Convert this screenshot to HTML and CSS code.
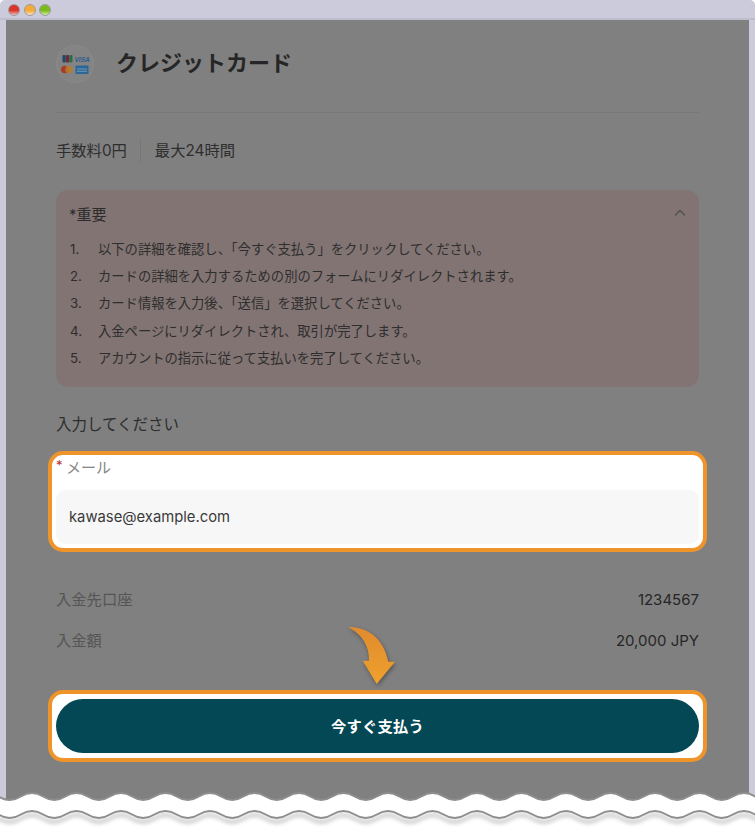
FILE: index.html
```html
<!DOCTYPE html>
<html lang="ja">
<head>
<meta charset="utf-8">
<title>クレジットカード</title>
<link rel="stylesheet" href="styles.css">
</head>
<body>
<div class="window">
  <div class="titlebar">
    <span class="light red"></span>
    <span class="light amber"></span>
    <span class="light green"></span>
  </div>
  <main class="screen">
    <header class="head">
      <div class="logo">
        <svg viewBox="0 0 38 38" width="38" height="38">
          <rect x="6.5" y="10" width="3.2" height="7.500" rx="1" fill="#21476a"/>
          <rect x="9.900" y="10" width="3.2" height="7.500" rx="1" fill="#6d2b35"/>
          <rect x="13.300" y="10" width="3.2" height="7.500" rx="1" fill="#2c6b45"/>
          <text x="18.500" y="16.500" class="visa">VISA</text>
          <circle cx="8.800" cy="24.500" r="3.800" fill="#a83a28"/>
          <circle cx="13" cy="24.500" r="3.800" fill="#b57d2c" fill-opacity=".85"/>
          <rect x="19.500" y="20.500" width="13" height="8.500" fill="#2d6796"/>
          <rect x="21" y="23.500" width="10" height="1" fill="#6f98ba"/>
          <rect x="21" y="25.800" width="10" height="1" fill="#6f98ba"/>
        </svg>
      </div>
      <h1 class="title">クレジットカード</h1>
    </header>
    <div class="meta">
      <span class="fee">手数料0円</span>
      <span class="time">最大24時間</span>
    </div>
    <section class="notice">
      <div class="notice-head">
        <span>*重要</span>
        <svg class="chevron" viewBox="0 0 12 8" width="12" height="8"><path d="M1 6.500 6 1.500l5 5" fill="none" stroke="#555" stroke-width="1.600"/></svg>
      </div>
      <ol class="steps">
        <li>以下の詳細を確認し、「今すぐ支払う」をクリックしてください。</li>
        <li>カードの詳細を入力するための別のフォームにリダイレクトされます。</li>
        <li>カード情報を入力後、「送信」を選択してください。</li>
        <li>入金ページにリダイレクトされ、取引が完了します。</li>
        <li>アカウントの指示に従って支払いを完了してください。</li>
      </ol>
    </section>
    <p class="prompt">入力してください</p>
    <div class="mail-box">
      <div class="mail-label"><span class="req">*</span>メール</div>
      <div class="mail-input">kawase@example.com</div>
    </div>
    <dl class="rows">
      <div class="row"><dt>入金先口座</dt><dd>1234567</dd></div>
      <div class="row"><dt>入金額</dt><dd>20,000 JPY</dd></div>
    </dl>
    <div class="pay-box">
      <svg class="arrow" viewBox="0 0 52 64" width="52" height="64">
        <defs>
          <linearGradient id="arrowFill" x1="0" y1="0" x2="0" y2="1">
            <stop offset="0" stop-color="#e08a2f"/>
            <stop offset="1" stop-color="#efa12c"/>
          </linearGradient>
        </defs>
        <path d="M1.300 0C20 0 36 10 41.300 34.700H48L29.700 57 15.700 33.700H22C22.500 20 16 8 1.300 0Z" fill="url(#arrowFill)"/>
      </svg>
      <button class="pay" type="button">今すぐ支払う</button>
    </div>
  </main>
  <svg class="tear" viewBox="0 0 755 40" width="755" height="40">
    <defs>
      <path id="wave" d="M-34.750 11s11.125-7 22.250-7 11.125 7 22.250 7 11.125-7 22.250-7 11.125 7 22.250 7 11.125-7 22.250-7 11.125 7 22.250 7 11.125-7 22.250-7 11.125 7 22.250 7 11.125-7 22.250-7 11.125 7 22.250 7 11.125-7 22.250-7 11.125 7 22.250 7 11.125-7 22.250-7 11.125 7 22.250 7 11.125-7 22.250-7 11.125 7 22.250 7 11.125-7 22.250-7 11.125 7 22.250 7 11.125-7 22.250-7 11.125 7 22.250 7 11.125-7 22.250-7 11.125 7 22.250 7 11.125-7 22.250-7 11.125 7 22.250 7 11.125-7 22.250-7 11.125 7 22.250 7 11.125-7 22.250-7 11.125 7 22.250 7 11.125-7 22.250-7 11.125 7 22.250 7 11.125-7 22.250-7 11.125 7 22.250 7 11.125-7 22.250-7 11.125 7 22.250 7 11.125-7 22.250-7 11.125 7 22.250 7"/>
    </defs>
    <rect x="0" y="11" width="755" height="29" fill="#fff"/>
    <use href="#wave" class="wave-top"/>
    <use href="#wave" y="18" class="wave-bottom"/>
  </svg>
</div>
</body>
</html>
```
FILE: styles.css
```css
* { box-sizing: border-box; }
html, body { margin: 0; padding: 0; background: #fff; }
body {
  font-family: Inter, "Noto Sans CJK JP", "Noto Sans", sans-serif;
  color: #303030;
}
.window {
  position: relative;
  width: 755px;
  height: 829px;
  overflow: hidden;
  display: flex;
  flex-direction: column;
  background: #cbcbdb;
  border-radius: 5px 5px 0 0;
}
.titlebar {
  flex: none;
  height: 20px;
  padding: 4px 0 0 8px;
  display: flex;
  gap: 3.500px;
  border-bottom: 2px solid #bdbdce;
}
.light {
  width: 12px;
  height: 12px;
  border-radius: 50%;
  border: 1px solid #9a9aa5;
}
.red { background: linear-gradient(#d9352a 55%, #f3bcb6); }
.amber { background: linear-gradient(#f5ab35 55%, #f8e3b8); }
.green { background: linear-gradient(#7cbb1e 55%, #d5e9a8); }
.screen {
  flex: 1;
  margin: 0 6px;
  padding: 0 50px;
  background: #808080;
  display: flex;
  flex-direction: column;
}
.head {
  display: flex;
  align-items: center;
  gap: 23px;
  margin-top: 25px;
  padding-bottom: 29px;
  border-bottom: 1px solid #787878;
}
.logo {
  width: 38px;
  height: 38px;
  border-radius: 50%;
  border: 1px solid #8b8b8b;
  background: #848484;
  overflow: hidden;
}
.logo svg { display: block; margin: -1px; }
.visa {
  font: italic 700 6.500px "Liberation Sans", sans-serif;
  fill: #2c5d8f;
}
.title {
  margin: 0 0 3px -1px;
  font-size: 22px;
  line-height: 32px;
  font-weight: 700;
  color: #262626;
}
.meta {
  display: flex;
  align-items: center;
  height: 24px;
  margin-top: 26px;
  font-size: 15.300px;
  line-height: 24px;
  color: #2e2e2e;
}
.fee {
  padding-right: 13.500px;
  border-right: 1px solid #767676;
}
.time { padding-left: 13.500px; }
.notice {
  margin-top: 27px;
  height: 197px;
  padding: 11px 13px 0 14px;
  border-radius: 12px;
  background: #827473;
}
.notice-head {
  display: flex;
  justify-content: space-between;
  align-items: center;
  height: 24px;
  margin-left: -1px;
  font-size: 15px;
  color: #2c2c2c;
}
.steps {
  list-style: none;
  counter-reset: step;
  margin: 10.500px 0 0;
  padding: 0;
  font-size: 13.300px;
  line-height: 27.400px;
  color: #2e2e2e;
}
.steps li {
  counter-increment: step;
  display: flex;
}
.steps li::before {
  content: counter(step) ".";
  flex: none;
  width: 28px;
}
.prompt {
  margin: 27px 0 0;
  font-size: 15.500px;
  line-height: 22px;
  color: #2e2e2e;
}
.mail-box {
  margin: 15px -8px 0;
  height: 101px;
  padding: 2px 4px 4px;
  border: 4px solid #ef932b;
  border-radius: 15px;
  background: #fff;
  display: flex;
  flex-direction: column;
}
.mail-label {
  height: 33px;
  font-size: 15px;
  line-height: 21px;
  color: #858585;
  display: flex;
}
.req {
  width: 10px;
  color: #b5302c;
  font-size: 13px;
  line-height: 17px;
}
.mail-input {
  height: 54px;
  padding: 0 13px;
  border-radius: 9px;
  background: #f7f7f7;
  font-size: 14.800px;
  line-height: 54px;
  color: #3a3a3a;
}
.rows {
  margin: 36px 0 0;
  display: flex;
  flex-direction: column;
  gap: 18px;
}
.row {
  display: flex;
  justify-content: space-between;
  height: 23px;
  font-size: 15px;
  line-height: 23px;
}
.row dt { color: #555; font-size: 15.300px; }
.row dd { margin: 0; color: #262626; }
.pay-box {
  position: relative;
  margin: 38px -8px 0;
  height: 72px;
  padding: 5px 4px;
  border: 4px solid #ef932b;
  border-radius: 15px;
  background: #fff;
}
.pay {
  display: block;
  width: 100%;
  height: 54px;
  padding: 0 0 2px;
  border: 0;
  border-radius: 27px;
  background: #034854;
  color: #fff;
  font: 700 15.300px Inter, "Noto Sans CJK JP", sans-serif;
  letter-spacing: .2px;
}
.arrow {
  position: absolute;
  left: 295px;
  top: -67px;
  filter: drop-shadow(1px 2px 2px rgba(0, 0, 0, .35));
}
.tear {
  position: absolute;
  left: 0;
  bottom: 0;
  display: block;
}
.wave-top {
  fill: #fff;
  stroke: #8e8e8e;
  stroke-width: 2px;
}
.wave-bottom {
  fill: none;
  stroke: #8e8e8e;
  stroke-width: 2px;
  filter: drop-shadow(0 4px 2px rgba(0, 0, 0, .4));
}
```
